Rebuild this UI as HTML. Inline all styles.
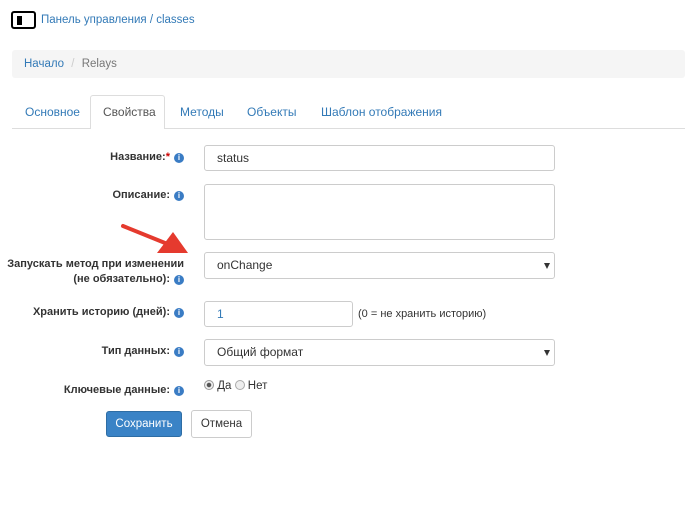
<!DOCTYPE html>
<html><head><meta charset="utf-8"><style>
body{margin:0;width:685px;height:532px;background:#fff;font-family:"Liberation Sans",sans-serif;font-size:12px;color:#333;position:relative;overflow:hidden}
.a{position:absolute}
a{color:#337ab7;text-decoration:none}
.lbl{position:absolute;right:501px;text-align:right;font-weight:bold;font-size:11px;line-height:15px;white-space:nowrap}
.i{display:inline-block;width:10px;height:10px;border-radius:50%;background:#3a7cc4;color:#fff;font-size:8px;line-height:10px;text-align:center;font-weight:bold;vertical-align:0;margin-left:4px}
.inp{position:absolute;left:204px;width:351px;border:1px solid #ccc;border-radius:3px;box-sizing:border-box;font-size:12px;padding-left:12px}
.sel:after{content:"";position:absolute;right:4px;top:50%;margin-top:-3px;border:3.5px solid transparent;border-top:6px solid #333;border-bottom:0}
.tab{position:absolute;top:97px;font-size:12px;color:#337ab7}
</style></head><body>
<div class="a" style="left:11px;top:11px;width:21px;height:14px;border:2.5px solid #000;border-radius:3px"></div>
<div class="a" style="left:17px;top:16px;width:5px;height:9px;background:#000"></div>
<div class="a" style="left:41px;top:14px;font-size:11.5px"><a>Панель управления / classes</a></div>
<div class="a" style="left:12px;top:50px;width:673px;height:28px;background:#f5f5f5;border-radius:3px"></div>
<div class="a" style="left:24px;top:58px;font-size:11.5px"><a>Начало</a> <span style="color:#ccc;padding:0 4px">/</span> <span style="color:#777">Relays</span></div>
<div class="a" style="left:12px;top:128px;width:673px;height:1px;background:#ddd"></div>
<div class="a" style="left:90px;top:95px;width:75px;height:34px;border:1px solid #ddd;border-bottom:0;border-radius:3px 3px 0 0;background:#fff;box-sizing:border-box"></div>
<div class="tab" style="left:25px;top:105px">Основное</div>
<div class="tab" style="left:103px;top:105px;color:#555">Свойства</div>
<div class="tab" style="left:180px;top:105px">Методы</div>
<div class="tab" style="left:247px;top:105px">Объекты</div>
<div class="tab" style="left:321px;top:105px">Шаблон отображения</div>

<div class="lbl" style="top:150px">Название:<span style="color:#c00">*</span><span class="i">i</span></div>
<div class="inp" style="top:145px;height:26px;line-height:24px">status</div>
<div class="lbl" style="top:188px">Описание:<span class="i">i</span></div>
<div class="inp" style="top:184px;height:56px"></div>
<div class="lbl" style="top:257px">Запускать метод при изменении<br>(не обязательно):<span class="i">i</span></div>
<div class="inp sel" style="top:252px;height:27px;line-height:25px">onChange</div>
<div class="lbl" style="top:305px">Хранить историю (дней):<span class="i">i</span></div>
<div class="inp" style="top:301px;height:26px;width:149px;line-height:24px;color:#337ab7">1</div>
<div class="a" style="left:358px;top:308px;font-size:11px">(0 = не хранить историю)</div>
<div class="lbl" style="top:344px">Тип данных:<span class="i">i</span></div>
<div class="inp sel" style="top:339px;height:27px;line-height:25px">Общий формат</div>
<div class="lbl" style="top:383px">Ключевые данные:<span class="i">i</span></div>
<div class="a" style="left:204px;top:380px;font-size:11.5px"><span style="display:inline-block;width:8px;height:8px;border:1px solid #999;border-radius:50%;background:radial-gradient(#555 35%,#eee 45%);vertical-align:-1px"></span> Да <span style="display:inline-block;width:8px;height:8px;border:1px solid #aaa;border-radius:50%;background:#eee;vertical-align:-1px"></span> Нет</div>
<div class="a" style="left:106px;top:411px;width:76px;height:26px;background:#3a83c6;border:1px solid #2e6da4;border-radius:3px;box-sizing:border-box;color:#fff;text-align:center;line-height:24px;font-size:11.5px">Сохранить</div>
<div class="a" style="left:191px;top:410px;width:61px;height:28px;border:1px solid #ccc;border-radius:3px;box-sizing:border-box;text-align:center;line-height:26px;font-size:11.5px">Отмена</div>
<svg class="a" style="left:0;top:0" width="685" height="532"><line x1="123" y1="226" x2="170" y2="245" stroke="#e53a2e" stroke-width="4" stroke-linecap="round"/><polygon points="188,253 157,253 173,232" fill="#e53a2e"/></svg>
</body></html>
